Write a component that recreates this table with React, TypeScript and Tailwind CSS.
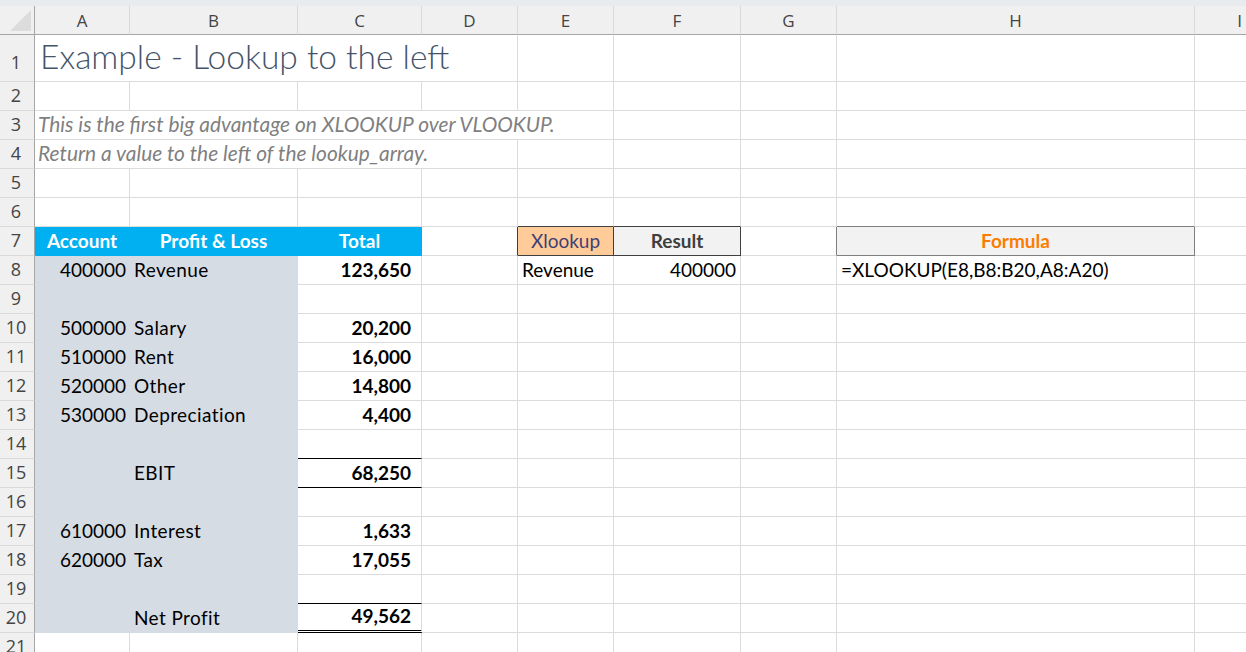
import React from 'react';
import { twMerge } from 'tailwind-merge';

const COLS = ['A', 'B', 'C', 'D', 'E', 'F', 'G', 'H', 'I'];
const ROWS = Array.from({ length: 22 }, (_, i) => i + 1);

type CellDef = { v?: React.ReactNode; c?: string };

const gray = 'bg-[#d6dce4] border-r-[#d6dce4] border-b-[#d6dce4]';
const blue = 'bg-[#00b0f0] border-r-[#00b0f0] border-b-[#00b0f0] text-white font-bold justify-center';
const num = 'justify-end pr-[3px]';
const total = 'justify-end pr-[10px] font-bold';
const noR = 'border-r-0';
const note = 'italic text-[#7f7f7f] text-[20.9px] pl-[3px] pb-[0px]';

const cells: Record<string, CellDef> = {
  A1: { v: 'Example - Lookup to the left', c: 'border-r-0 text-[33.5px] font-light text-[#44546a] pl-[5px] pb-[0px]' },
  B1: { c: noR },
  C1: { c: noR },

  A3: { v: 'This is the first big advantage on XLOOKUP over VLOOKUP.', c: `${note} ${noR}` },
  B3: { c: noR },
  C3: { c: noR },
  D3: { c: noR },
  A4: { v: 'Return a value to the left of the lookup_array.', c: `${note} ${noR}` },
  B4: { c: noR },
  C4: { c: noR },

  E6: { c: 'border-b-[#3f3f3f]' },
  F6: { c: 'border-b-[#3f3f3f]' },
  H6: { c: 'border-b-[#7f7f7f]' },

  A7: { v: 'Account', c: blue },
  B7: { v: 'Profit & Loss', c: blue },
  C7: { v: 'Total', c: blue },
  D7: { c: 'border-r-[#3f3f3f]' },
  E7: { v: 'Xlookup', c: 'bg-[#ffcc99] text-[#3f3f76] justify-center border-r-[#3f3f3f] border-b-[#3f3f3f]' },
  F7: { v: 'Result', c: 'bg-[#f2f2f2] text-[#3f3f3f] font-bold justify-center border-r-[#3f3f3f] border-b-[#3f3f3f]' },
  G7: { c: 'border-r-[#7f7f7f]' },
  H7: { v: 'Formula', c: 'bg-[#f2f2f2] text-[#fa7d00] font-bold justify-center border-r-[#7f7f7f] border-b-[#7f7f7f]' },

  E8: { v: 'Revenue', c: 'pl-[4px]' },
  F8: { v: '400000', c: 'justify-end pr-[4px]' },
  H8: { v: '=XLOOKUP(E8,B8:B20,A8:A20)', c: 'pl-[4px]' },

  C14: { c: 'border-b-black' },
  C15: { v: '68,250', c: `${total} border-b-black` },
  C19: { c: 'border-b-black' },
  C20: { v: '49,562', c: `${total} border-b-[3px] border-double border-b-black` },
};

const lines: [number, string, string, string?][] = [
  [8, '400000', 'Revenue', '123,650'],
  [10, '500000', 'Salary', '20,200'],
  [11, '510000', 'Rent', '16,000'],
  [12, '520000', 'Other', '14,800'],
  [13, '530000', 'Depreciation', '4,400'],
  [15, '', 'EBIT'],
  [17, '610000', 'Interest', '1,633'],
  [18, '620000', 'Tax', '17,055'],
  [20, '', 'Net Profit'],
];

for (let r = 8; r <= 20; r++) {
  cells[`A${r}`] = { c: `${gray} ${num}` };
  cells[`B${r}`] = { c: `${gray} pl-[4px] tracking-[0.4px]` };
}
for (const [r, acc, name, amt] of lines) {
  cells[`A${r}`].v = acc;
  cells[`B${r}`].v = name;
  if (amt) cells[`C${r}`] = { v: amt, c: total };
}

const base =
  'flex items-end pb-[0px] leading-none whitespace-nowrap border-r border-b border-r-[#dadcdd] border-b-[#dadcdd] text-[19px] text-black';

export default function App() {
  return (
    <div className="w-[1246px] h-[652px] overflow-hidden bg-white font-['Lato',sans-serif]">
      <div className="h-[6px] bg-[#e9ecef]" />
      <div className="grid grid-cols-[35px_95px_168px_124px_96px_96px_127px_96px_358px_90px] grid-rows-[29px_47px_repeat(21,29px)]">
        <div className="bg-[#f0f0f0] border-r border-b border-r-[#a6a6a6] border-b-[#a6a6a6]">
          <svg width="34" height="28" viewBox="0 0 34 28">
            <polygon points="10,25 31,4 31,25" fill="#dcdcdc" />
          </svg>
        </div>
        {COLS.map((col) => (
          <div
            key={col}
            className="flex items-center justify-center pt-[2px] bg-[#f0f0f0] border-r border-b border-r-[#d9d9d9] border-b-[#a6a6a6] font-['Open_Sans',sans-serif] text-[17px] text-[#444]"
          >
            {col}
          </div>
        ))}
        {ROWS.map((r) => (
          <React.Fragment key={r}>
            <div
              className={twMerge(
                "flex items-end justify-center pr-[2px] pb-[1px] leading-none bg-[#f0f0f0] border-r border-b border-r-[#a6a6a6] border-b-[#d9d9d9] font-['Open_Sans',sans-serif] text-[18px] text-[#444]",
                r === 1 && 'pb-[5px]'
              )}
            >
              {r}
            </div>
            {COLS.map((col) => {
              const d = cells[`${col}${r}`];
              return (
                <div key={col} className={twMerge(base, d?.c)}>
                  {d?.v}
                </div>
              );
            })}
          </React.Fragment>
        ))}
      </div>
    </div>
  );
}
